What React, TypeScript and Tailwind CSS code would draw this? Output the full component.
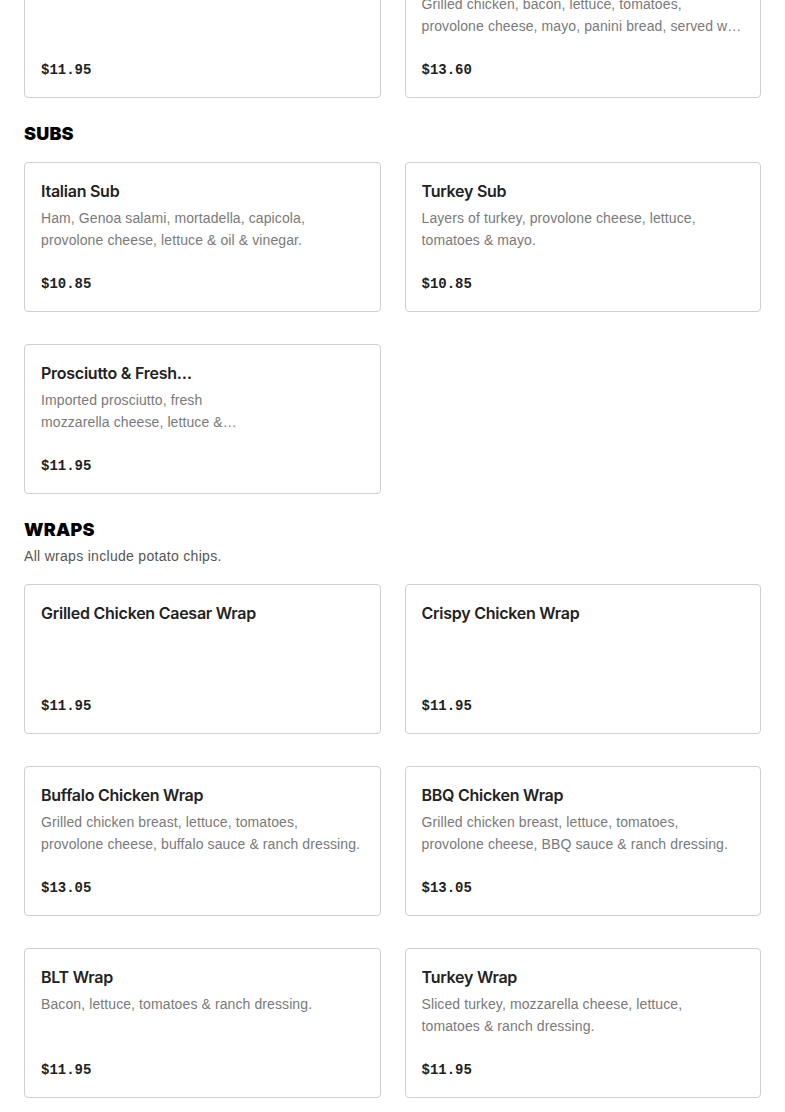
import React from "react";

interface Item {
  name: string;
  desc?: string;
  price: string;
  narrow?: boolean;
}

interface Section {
  title?: string;
  note?: string;
  items: Item[];
}

const sections: Section[] = [
  {
    items: [
      { name: "Meatball Panini", price: "$11.95" },
      {
        name: "Chicken Bacon Panini",
        desc: "Grilled chicken, bacon, lettuce, tomatoes, provolone cheese, mayo, panini bread, served with chips.",
        price: "$13.60",
      },
    ],
  },
  {
    title: "SUBS",
    items: [
      { name: "Italian Sub", desc: "Ham, Genoa salami, mortadella, capicola, provolone cheese, lettuce & oil & vinegar.", price: "$10.85" },
      { name: "Turkey Sub", desc: "Layers of turkey, provolone cheese, lettuce, tomatoes & mayo.", price: "$10.85" },
      {
        name: "Prosciutto & Fresh Mozzarella Sub",
        desc: "Imported prosciutto, fresh mozzarella cheese, lettuce & tomatoes with balsamic.",
        price: "$11.95",
        narrow: true,
      },
    ],
  },
  {
    title: "WRAPS",
    note: "All wraps include potato chips.",
    items: [
      { name: "Grilled Chicken Caesar Wrap", price: "$11.95" },
      { name: "Crispy Chicken Wrap", price: "$11.95" },
      { name: "Buffalo Chicken Wrap", desc: "Grilled chicken breast, lettuce, tomatoes, provolone cheese, buffalo sauce & ranch dressing.", price: "$13.05" },
      { name: "BBQ Chicken Wrap", desc: "Grilled chicken breast, lettuce, tomatoes, provolone cheese, BBQ sauce & ranch dressing.", price: "$13.05" },
      { name: "BLT Wrap", desc: "Bacon, lettuce, tomatoes & ranch dressing.", price: "$11.95" },
      { name: "Turkey Wrap", desc: "Sliced turkey, mozzarella cheese, lettuce, tomatoes & ranch dressing.", price: "$11.95" },
    ],
  },
];

const Card = ({ item }: { item: Item }) => (
  <div className="h-[150px] border border-[#cfcfcf] rounded-[4px] bg-white px-4 pt-4 pb-[15px] flex flex-col justify-between">
    <div className={item.narrow ? "max-w-[196px]" : ""}>
      <div className="text-[16px] leading-6 font-semibold tracking-[-0.25px] text-[#222] line-clamp-1">{item.name}</div>
      {item.desc && (
        <p className="mt-1 font-['Liberation_Sans',sans-serif] text-[14px] leading-[22px] tracking-[0.1px] text-[#7a7a7a] line-clamp-2">
          {item.desc}
        </p>
      )}
    </div>
    <div className="font-['Liberation_Mono',monospace] font-bold text-[14px] leading-6 text-[#222]">{item.price}</div>
  </div>
);

export default function App() {
  return (
    <div className="bg-white min-h-screen overflow-hidden font-['Inter',sans-serif]">
      <div className="px-6 -mt-[52px] pb-8">
        {sections.map((s, i) => (
          <div key={i} className={i > 0 ? "mt-[22px]" : ""}>
            {s.title && <h2 className="text-[18px] leading-7 font-black text-black tracking-[0.2px]">{s.title}</h2>}
            {s.note && (
              <p className="font-['Liberation_Sans',sans-serif] text-[14px] leading-5 tracking-[0.3px] text-[#555] mt-[2px]">{s.note}</p>
            )}
            <div className={`grid grid-cols-2 gap-x-6 gap-y-8 ${s.title ? (s.note ? "mt-[18px]" : "mt-[14px]") : ""}`}>
              {s.items.map((it, j) => (
                <Card key={j} item={it} />
              ))}
            </div>
          </div>
        ))}
      </div>
    </div>
  );
}
